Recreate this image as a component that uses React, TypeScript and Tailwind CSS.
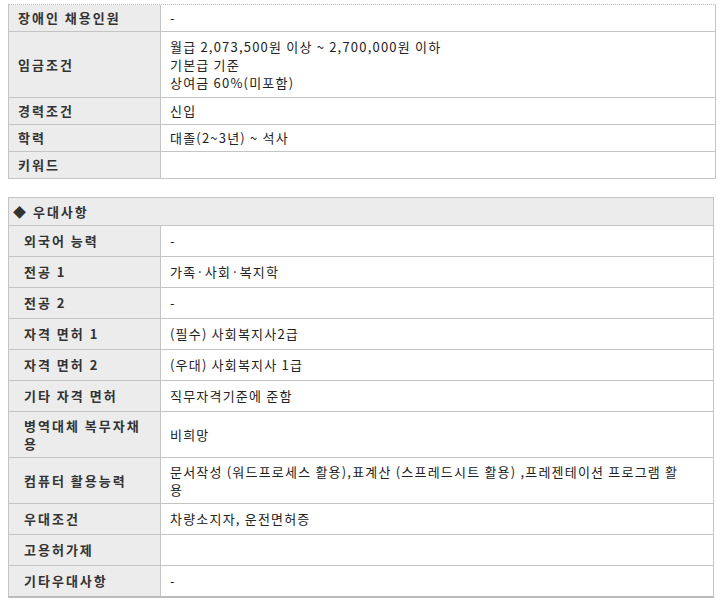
import type { ReactNode } from 'react';

type Row = {
  label: ReactNode;
  value: ReactNode;
  tall?: boolean;
};

const basicRows: Row[] = [
  { label: '장애인 채용인원', value: '-' },
  {
    label: '임금조건',
    value: (
      <>
        월급 2,073,500원 이상 ~ 2,700,000원 이하
        <br />
        기본급 기준
        <br />
        상여금 60%(미포함)
      </>
    ),
    tall: true,
  },
  { label: '경력조건', value: '신입' },
  { label: '학력', value: '대졸(2~3년) ~ 석사' },
  { label: '키워드', value: '' },
];

const preferRows: Row[] = [
  { label: '외국어 능력', value: '-' },
  { label: '전공 1', value: '가족·사회·복지학' },
  { label: '전공 2', value: '-' },
  { label: '자격 면허 1', value: '(필수) 사회복지사2급' },
  { label: '자격 면허 2', value: '(우대) 사회복지사 1급' },
  { label: '기타 자격 면허', value: '직무자격기준에 준함' },
  {
    label: (
      <>
        병역대체 복무자채
        <br />용
      </>
    ),
    value: '비희망',
    tall: true,
  },
  {
    label: '컴퓨터 활용능력',
    value: (
      <>
        문서작성 (워드프로세스 활용),표계산 (스프레드시트 활용) ,프레젠테이션 프로그램 활
        <br />용
      </>
    ),
    tall: true,
  },
  { label: '우대조건', value: '차량소지자, 운전면허증' },
  { label: '고용허가제', value: '' },
  { label: '기타우대사항', value: '-' },
];

export default function App() {
  return (
    <div className="h-[608px] w-[722px] bg-white pl-[8px] pt-[4px] font-['Noto_Sans_CJK_KR',sans-serif] text-[13px] text-[#222]">
      <div className="w-[708px] border-t border-dotted border-[#bdbdbd]">
        {basicRows.map((row, i) => (
          <div key={i} className="flex border-x border-b border-[#c4c4c4]">
            <div
              className={`flex w-[152px] shrink-0 items-center border-r border-[#c4c4c4] bg-[#ececec] pl-[9px] font-bold leading-[18px] tracking-[2px] text-[#333] ${
                row.tall ? 'h-[65px]' : 'h-[26px]'
              }`}
            >
              {row.label}
            </div>
            <div className="flex flex-1 items-center pl-[9px] leading-[18px] tracking-[1.2px]">
              <div>{row.value}</div>
            </div>
          </div>
        ))}
      </div>

      <div className="mt-[18px] w-[706px] border-x border-t border-b-2 border-[#c4c4c4] border-b-[#bcbcbc]">
        <div className="flex h-[28px] items-center border-b border-[#c4c4c4] bg-[#ececec] pl-[4px] font-bold tracking-[2px] text-[#333]">
          ◆ 우대사항
        </div>
        {preferRows.map((row, i) => (
          <div
            key={i}
            className={`flex ${
              i < preferRows.length - 1 ? 'border-b border-[#c4c4c4]' : ''
            }`}
          >
            <div
              className={`flex w-[152px] shrink-0 items-center border-r border-[#c4c4c4] bg-[#ececec] pl-[15px] font-bold leading-[18px] tracking-[2px] text-[#333] ${
                row.tall ? 'h-[45px]' : 'h-[30px]'
              }`}
            >
              <div>{row.label}</div>
            </div>
            <div className="flex flex-1 items-center pl-[9px] leading-[18px] tracking-[1.2px]">
              <div>{row.value}</div>
            </div>
          </div>
        ))}
      </div>
    </div>
  );
}
